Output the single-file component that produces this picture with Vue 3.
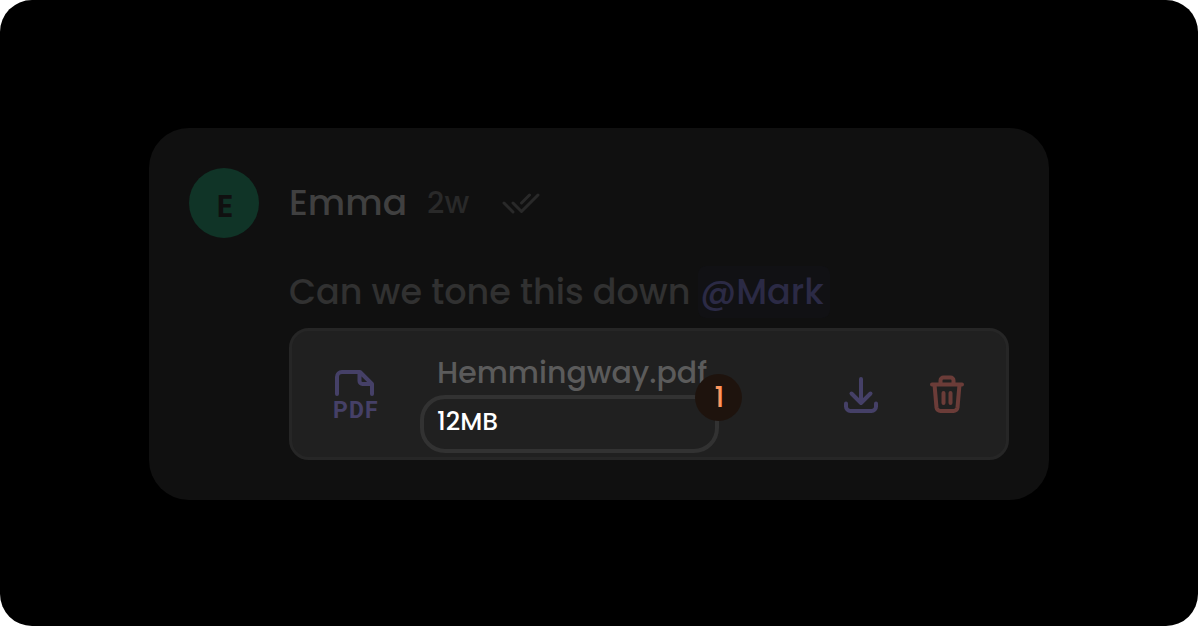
<script setup>
const comment = {
  author: 'Emma',
  initial: 'E',
  age: '2w',
  text: 'Can we tone this down',
  mention: '@Mark',
}
const file = { name: 'Hemmingway.pdf', size: '12MB' }
</script>

<template>
  <main class="stage">
    <article class="card">
      <div class="avatar">{{ comment.initial }}</div>
      <header class="head">
        <span class="author">{{ comment.author }}</span>
        <span class="age">{{ comment.age }}</span>
        <svg class="checks" width="44" height="28" viewBox="0 0 44 28" aria-hidden="true">
          <path d="M5 14 14 23M14 14 22.500 22.500 39 6M22.500 14 30.500 6" />
        </svg>
      </header>
      <div class="body">
        <p class="message">
          <span>{{ comment.text }}</span>
          <a class="mention" href="#mark">{{ comment.mention }}</a>
        </p>
        <section class="attachment">
          <svg class="pdf" width="48" height="56" viewBox="0 0 48 56" role="img" aria-label="PDF file">
            <path d="M5 28V11a5 5 0 0 1 5-5H28L40 18V28M27.500 6V15a3 3 0 0 0 3 3H40" />
            <text x="1 17 33" y="52">PDF</text>
          </svg>
          <div class="info">
            <span class="name">{{ file.name }}</span>
            <div class="highlight">
              <span class="size">{{ file.size }}</span>
              <span class="badge">1</span>
            </div>
          </div>
          <div class="actions">
            <button class="action download" type="button" aria-label="Download">
              <svg width="40" height="44" viewBox="0 0 40 44">
                <path d="M20 7V31M10.500 21.500 20 31 29.500 21.500M5 31.500V34.500a4.500 4.500 0 0 0 4.500 4.500H30.500a4.500 4.500 0 0 0 4.500-4.500V31.500" />
              </svg>
            </button>
            <button class="action delete" type="button" aria-label="Delete">
              <svg width="40" height="44" viewBox="0 0 40 44">
                <path d="M5 12.500H35M13.500 12.500V8.500a3 3 0 0 1 3-3H23.500a3 3 0 0 1 3 3V12.500M7.500 12.500 9.500 35.500a4 4 0 0 0 4 3.500H26.500a4 4 0 0 0 4-3.500L32.500 12.500M16.500 21V31M23.500 21V31" />
              </svg>
            </button>
          </div>
        </section>
      </div>
    </article>
  </main>
</template>

<style>
body {
  margin: 0;
  background: #fff;
}
</style>

<style scoped>
.stage {
  box-sizing: border-box;
  min-height: 100vh;
  padding: 40px;
  display: flex;
  align-items: center;
  justify-content: center;
  background: #000;
  border-radius: 32px;
  font-family: Poppins, Inter, "Liberation Sans", sans-serif;
  font-weight: 500;
}
.card {
  box-sizing: border-box;
  width: 100%;
  max-width: 900px;
  padding: 40px;
  margin-top: 2px;
  display: grid;
  grid-template-columns: 70px minmax(0, 1fr);
  column-gap: 30px;
  row-gap: 28px;
  background: #101010;
  border-radius: 40px;
}
.avatar {
  height: 70px;
  border-radius: 50%;
  background: #103427;
  color: #101010;
  font-size: 32px;
  font-weight: 600;
  line-height: 76px;
  text-align: center;
  text-indent: 2px;
}
.head {
  display: flex;
  align-items: center;
  height: 70px;
}
.author {
  color: #404040;
  font-size: 36px;
  line-height: 70px;
}
.age {
  margin-left: 20px;
  color: #292929;
  font-size: 30px;
}
.checks {
  margin-left: 30px;
  color: #292929;
}
svg path {
  fill: none;
  stroke: currentColor;
  stroke-width: 3;
  stroke-linecap: round;
  stroke-linejoin: round;
}
.body {
  grid-column: 2;
}
.message {
  display: flex;
  flex-wrap: wrap;
  column-gap: 8px;
  margin: 0 0 10px;
  color: #313131;
  font-size: 35px;
  line-height: 52px;
}
.mention {
  padding: 0 6px 0 2px;
  border-radius: 8px;
  background: #111114;
  color: #2b2a45;
  text-decoration: none;
}
.attachment {
  box-sizing: border-box;
  min-height: 132px;
  padding: 0 39px 0 40px;
  display: flex;
  align-items: center;
  background: #202020;
  border: 3px solid #262626;
  border-radius: 20px;
}
.pdf {
  flex: none;
  overflow: visible;
  color: #454067;
}
.pdf path {
  stroke-width: 4;
}
.pdf text {
  fill: currentColor;
  font-family: Roboto, sans-serif;
  font-size: 23px;
  font-weight: 700;
}
.info {
  display: flex;
  flex-direction: column;
  gap: 2px;
  margin-left: 40px;
  padding-top: 18px;
}
.name {
  padding-left: 17px;
  color: #5b5b5b;
  font-size: 30px;
  line-height: 40px;
}
.highlight {
  box-sizing: border-box;
  position: relative;
  width: 299px;
  height: 58px;
  padding: 0 13px;
  border: 4px solid #323232;
  border-radius: 25px;
}
.size {
  color: #fff;
  font-size: 25px;
  line-height: 46px;
}
.badge {
  position: absolute;
  top: -25px;
  right: -27px;
  width: 47px;
  height: 47px;
  border-radius: 50%;
  background: #1e130d;
  color: #ff965d;
  font-size: 28px;
  line-height: 48px;
  text-align: center;
  text-indent: 2px;
}
.actions {
  display: flex;
  gap: 46px;
  margin-left: auto;
}
.action {
  padding: 0;
  border: 0;
  background: none;
  cursor: pointer;
}
.action svg {
  display: block;
}
.action path {
  stroke-width: 4;
}
.download {
  color: #454067;
}
.delete {
  color: #6b3c38;
}
</style>
